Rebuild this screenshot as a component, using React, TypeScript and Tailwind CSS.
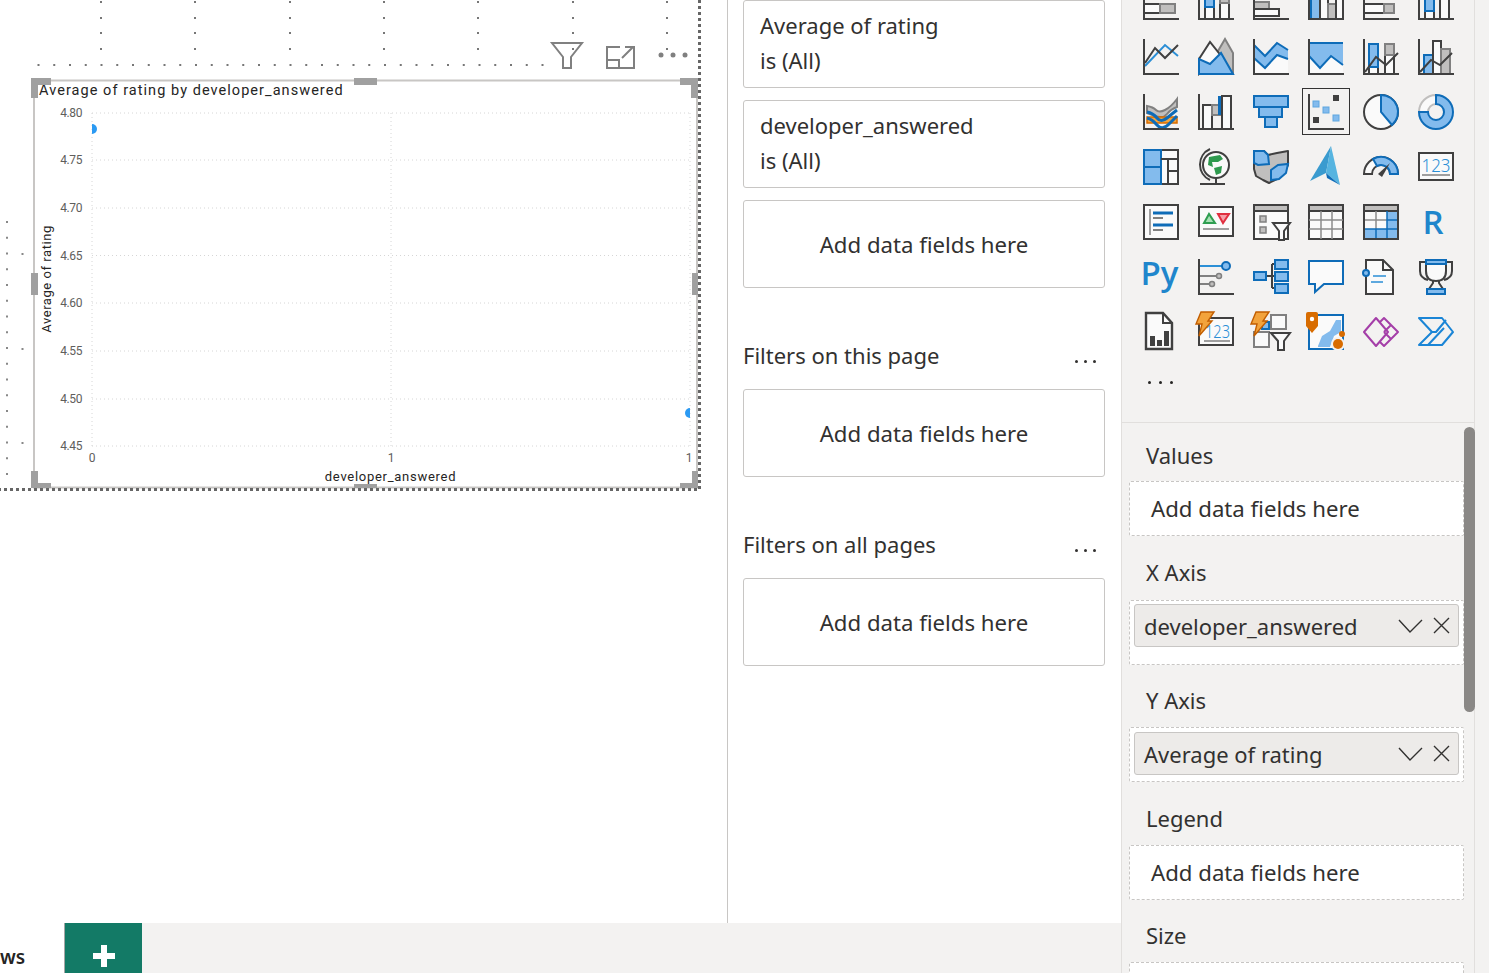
import type { ReactNode } from "react"

const D = "#404040"
const B = "#0e6cb8"
const L = "#83bbed"
const G = "#c0bfbe"
const W = "#fafafa"
const M = "#808080"
const T = "#8c8c8c"

const axis = <path d="M1 0V35H36" fill="none" stroke={D} strokeWidth="2" />
const bolt = <path d="M3 -2H16L10 7H14L1 22L4 10H-2Z" fill="#f2a33c" stroke="#c25e00" strokeWidth="1.4" />

const icons: ReactNode[] = [
  // row 1, cut by the top of the window
  <>
    <rect x="1" y="20" width="16" height="9" fill={W} stroke={D} strokeWidth="2" />
    <rect x="17" y="20" width="15" height="9" fill={G} stroke={M} strokeWidth="2" />
    {axis}
  </>,
  <>
    <rect x="7" y="0" width="9" height="35" fill={W} stroke={D} strokeWidth="2" />
    <rect x="7" y="0" width="9" height="23" fill={L} stroke={B} strokeWidth="2" />
    <rect x="22" y="0" width="9" height="35" fill={W} stroke={D} strokeWidth="2" />
    <rect x="22" y="0" width="9" height="19" fill={G} stroke={M} strokeWidth="2" />
    {axis}
  </>,
  <>
    <rect x="1" y="18" width="15" height="7" fill={G} stroke={M} strokeWidth="2" />
    <rect x="1" y="25" width="25" height="7" fill={W} stroke={D} strokeWidth="2" />
    <path d="M1 16V35H36" fill="none" stroke={D} strokeWidth="2" />
  </>,
  <>
    <rect x="3" y="0" width="9" height="35" fill={L} stroke={B} strokeWidth="2" />
    <rect x="12" y="0" width="8" height="35" fill={W} stroke={D} strokeWidth="2" />
    <rect x="20" y="20" width="8" height="15" fill={G} stroke={M} strokeWidth="2" />
    <rect x="28" y="0" width="7" height="35" fill={W} stroke={D} strokeWidth="2" />
    {axis}
  </>,
  <>
    <rect x="1" y="20" width="20" height="9" fill={W} stroke={D} strokeWidth="2" />
    <rect x="21" y="20" width="10" height="9" fill={G} stroke={M} strokeWidth="2" />
    {axis}
  </>,
  <>
    <rect x="7" y="0" width="9" height="35" fill={W} stroke={D} strokeWidth="2" />
    <rect x="7" y="0" width="9" height="27" fill={L} stroke={B} strokeWidth="2" />
    <rect x="22" y="0" width="9" height="35" fill={W} stroke={D} strokeWidth="2" />
    {axis}
  </>,
  // row 2
  <>
    <path d="M2 27L22 6L35 17" fill="none" stroke="#2b8fd6" strokeWidth="2" />
    <path d="M2 24L12 9L22 19L35 6" fill="none" stroke={D} strokeWidth="2" />
    {axis}
  </>,
  <>
    <path d="M20 12L27 0L35 14V35H20Z" fill={G} stroke={M} strokeWidth="2" />
    <path d="M1 20L12 3L24 18L1 35Z" fill={W} stroke={D} strokeWidth="2" />
    <path d="M1 20V35H35L23 14L12 25Z" fill={L} stroke={B} strokeWidth="2" />
  </>,
  <>
    <path d="M1 19L12 29L24 16L35 20V35H1Z" fill={W} />
    <path d="M1 6L12 17L24 4L35 11V20L24 16L12 29L1 19Z" fill={L} />
    <path d="M1 6L12 17L24 4L35 11M1 19L12 29L24 16L35 20" fill="none" stroke={B} strokeWidth="2" />
    <path d="M1 0V35H36" fill="none" stroke={D} strokeWidth="2" />
  </>,
  <>
    <path d="M1 17L12 29L23 17L35 26V35H1Z" fill={W} />
    <path d="M1 4H35V26L23 17L12 29L1 17Z" fill={L} />
    <path d="M1 4H35M1 17L12 29L23 17L35 26" fill="none" stroke={B} strokeWidth="2" />
    <path d="M1 0V35H36" fill="none" stroke={D} strokeWidth="2" />
  </>,
  <>
    <rect x="6" y="5" width="9" height="30" fill={W} stroke={D} strokeWidth="2" />
    <rect x="6" y="5" width="9" height="23" fill={L} stroke={B} strokeWidth="2" />
    <rect x="22" y="5" width="9" height="30" fill={W} stroke={D} strokeWidth="2" />
    <rect x="22" y="5" width="9" height="11" fill={G} stroke={M} strokeWidth="2" />
    <path d="M2 33L13 18L23 26L35 14" fill="none" stroke={D} strokeWidth="2" />
    {axis}
  </>,
  <>
    <rect x="6" y="16" width="9" height="19" fill={L} stroke={B} strokeWidth="2" />
    <rect x="15" y="2" width="8" height="33" fill={W} stroke={D} strokeWidth="2" />
    <rect x="23" y="10" width="9" height="25" fill={G} stroke={M} strokeWidth="2" />
    <path d="M2 33L13 21L22 26L34 14" fill="none" stroke={D} strokeWidth="2" />
    {axis}
  </>,
  // row 3
  <>
    <path d="M4 12Q10 13 13 16T22 16T34 5V13Q28 15 24 20T12 22L4 19Z" fill={G} stroke={M} strokeWidth="2" />
    <path d="M4 23H34V29H4Z" fill="#f2a33c" stroke="#d86c00" strokeWidth="1.5" />
    <path d="M4 18Q10 19 14 24T24 24T34 16" fill="none" stroke={B} strokeWidth="3" />
    <path d="M4 24Q9 25 14 31T26 30T34 22" fill="none" stroke={B} strokeWidth="3" />
    {axis}
  </>,
  <>
    <rect x="5" y="11" width="9" height="24" fill={W} stroke={D} strokeWidth="2" />
    <rect x="14" y="11" width="9" height="10" fill={G} stroke={M} strokeWidth="2" />
    <rect x="20" y="2" width="4" height="19" fill={B} />
    <rect x="24" y="2" width="9" height="33" fill={W} stroke={D} strokeWidth="2" />
    {axis}
  </>,
  <path d="M1 2H35V13H29V23H24V33H12V23H6V13H1ZM1 13H35M6 23H30" fill={L} stroke={B} strokeWidth="2" />,
  <>
    <rect x="25" y="1" width="6" height="6" fill={D} />
    <rect x="5" y="7" width="6" height="6" fill={L} stroke="#5ea6e0" />
    <rect x="15" y="13" width="6" height="6" fill={L} stroke="#5ea6e0" />
    <rect x="5" y="23" width="6" height="6" fill={D} />
    <rect x="25" y="21" width="6" height="6" fill={L} stroke="#5ea6e0" />
    <path d="M1 0V35H36" fill="none" stroke={D} strokeWidth="2" />
  </>,
  <>
    <circle cx="18" cy="18" r="17" fill={W} stroke={D} strokeWidth="2" />
    <path d="M18 1A17 17 0 0 1 29 31L18 18Z" fill={L} stroke={B} strokeWidth="2" />
  </>,
  <>
    <path d="M18 1A17 17 0 0 0 1 18H10A8 8 0 0 1 18 10Z" fill={W} stroke={G} strokeWidth="2" />
    <path d="M18 1A17 17 0 1 1 1 18H10A8 8 0 1 0 18 10Z" fill={L} stroke={B} strokeWidth="2" />
  </>,
  // row 4
  <>
    <rect x="1" y="1" width="34" height="34" fill={W} stroke={D} strokeWidth="2" />
    <rect x="1" y="1" width="17" height="17" fill={L} stroke={B} strokeWidth="2" />
    <rect x="1" y="18" width="17" height="17" fill={L} stroke={B} strokeWidth="2" />
    <path d="M18 10H35M25 10V35M25 22H35" fill="none" stroke={D} strokeWidth="2" />
  </>,
  <>
    <circle cx="18" cy="16" r="13" fill={W} stroke={D} strokeWidth="2" />
    <path d="M11 8L22 6L25 10L20 13L14 13L15 18L10 16Z" fill="#2e9a4e" />
    <path d="M16 19L24 17L23 24L18 26Z" fill="#2e9a4e" />
    <path d="M12 0A17 17 0 0 0 12 31" fill="none" stroke={D} strokeWidth="2" />
    <path d="M18 29V34M2 35H27" fill="none" stroke={D} strokeWidth="2" />
  </>,
  <>
    <path d="M1 2H11L15 6L24 4L35 2V16L31 24L24 30L16 34L10 31L3 27L1 20Z" fill={G} stroke={D} strokeWidth="2" strokeLinejoin="round" />
    <path d="M1 2H11L15 6L16 15L5 16L1 14Z" fill={L} stroke={B} strokeWidth="2" />
    <path d="M18 21L25 16L35 15L33 24L26 30L18 31Z" fill={L} stroke={B} strokeWidth="2" />
  </>,
  <>
    <path d="M23 -3L2 32L18 24Z" fill="#3a9bcf" />
    <path d="M23 -3L18 24L32 36Z" fill="#56b4e0" />
    <path d="M18 24L32 36L19 29Z" fill="#0e6cb8" />
  </>,
  <>
    <path d="M1 25A17 17 0 0 1 35 25H27A9 9 0 0 0 9 25Z" fill={W} stroke={D} strokeWidth="2" />
    <path d="M10 10A17 17 0 0 1 35 25H27A9 9 0 0 0 14 17Z" fill={L} stroke={B} strokeWidth="2" />
    <path d="M15 25L27 14L19 28Z" fill={D} />
  </>,
  <>
    <rect x="1" y="4" width="34" height="27" fill={W} stroke={D} strokeWidth="2" />
    <text x="18" y="23" textAnchor="middle" fontSize="18" textLength="29" lengthAdjust="spacingAndGlyphs" fill="#2b8fd6" fontFamily="'Noto Sans', sans-serif" fontWeight="300">123</text>
    <path d="M4 26H32" stroke={M} strokeWidth="1.5" />
  </>,
  // row 5
  <>
    <rect x="1" y="1" width="34" height="34" fill={W} stroke={D} strokeWidth="2" />
    <path d="M7 5V31" stroke={M} strokeWidth="1.5" />
    <path d="M10 9H30M10 21H30" stroke={B} strokeWidth="3" />
    <path d="M10 14H20M10 26H20" stroke={M} strokeWidth="2" />
  </>,
  <>
    <rect x="1" y="3" width="34" height="29" fill={W} stroke={D} strokeWidth="2" />
    <path d="M6 19L11 10L17 19Z" fill="#a8e0b5" stroke="#2f9e51" strokeWidth="2" />
    <path d="M20 10H31L25 19Z" fill="#f5a0a8" stroke="#e03040" strokeWidth="2" />
    <path d="M5 25H31" stroke={M} strokeWidth="1.5" />
  </>,
  <>
    <rect x="1" y="1" width="34" height="34" fill={W} stroke={D} strokeWidth="2" />
    <rect x="1" y="1" width="34" height="6" fill={G} stroke={D} strokeWidth="2" />
    <rect x="7" y="12" width="6" height="6" fill={G} stroke={M} strokeWidth="1.5" />
    <rect x="7" y="23" width="6" height="6" fill={G} stroke={M} strokeWidth="1.5" />
    <path d="M20 19H37L31 27V36H26V27Z" fill={W} stroke={D} strokeWidth="2" />
  </>,
  <>
    <rect x="1" y="1" width="34" height="34" fill={W} stroke={D} strokeWidth="2" />
    <rect x="1" y="1" width="34" height="6" fill={G} stroke={D} strokeWidth="2" />
    <path d="M13 7V35M24 7V35M1 16H35M1 25H35" stroke={T} strokeWidth="1.5" />
  </>,
  <>
    <rect x="1" y="1" width="34" height="34" fill={W} stroke={D} strokeWidth="2" />
    <rect x="24" y="7" width="11" height="28" fill={L} />
    <rect x="1" y="25" width="34" height="10" fill={L} />
    <rect x="1" y="1" width="34" height="6" fill={G} stroke={D} strokeWidth="2" />
    <path d="M13 7V25M1 16H24" stroke={T} strokeWidth="1.5" />
    <path d="M24 16H35M1 25H35M13 25V35M24 7V35" stroke={B} strokeWidth="1.5" />
    <rect x="1" y="1" width="34" height="34" fill="none" stroke={D} strokeWidth="2" />
  </>,
  <text x="15" y="30" textAnchor="middle" fontSize="33" fontWeight="600" fill="#1f86cc" fontFamily="'Open Sans', sans-serif">R</text>,
  // row 6
  <text x="16.5" y="26" textAnchor="middle" fontSize="33" fontWeight="600" fill="#1f86cc" fontFamily="'Open Sans', sans-serif">Py</text>,
  <>
    <path d="M1 0V35H36" fill="none" stroke={D} strokeWidth="2" />
    <path d="M2 7H24" stroke="#2b8fd6" strokeWidth="2" />
    <circle cx="28" cy="7" r="4" fill={L} stroke={B} strokeWidth="2" />
    <path d="M2 17H18M2 25H11" stroke={M} strokeWidth="2" />
    <circle cx="21" cy="17" r="2.5" fill={G} stroke={M} strokeWidth="1.5" />
    <circle cx="14" cy="25" r="2.5" fill={G} stroke={M} strokeWidth="1.5" />
  </>,
  <>
    <path d="M13 17H19M19 5V29M19 5H22M19 17H22M19 29H22" fill="none" stroke={D} strokeWidth="2" />
    <rect x="1" y="13" width="12" height="8" fill={L} stroke={B} strokeWidth="2" />
    <rect x="22" y="1" width="13" height="9" fill={L} stroke={B} strokeWidth="2" />
    <rect x="22" y="13" width="13" height="9" fill={L} stroke={B} strokeWidth="2" />
    <rect x="22" y="25" width="13" height="9" fill={L} stroke={B} strokeWidth="2" />
  </>,
  <path d="M1 2H35V25H16L7 33V25H1Z" fill={W} stroke={B} strokeWidth="2" />,
  <>
    <path d="M3 1H20L30 11V35H3Z" fill={W} stroke={D} strokeWidth="2" />
    <path d="M20 1V11H30" fill="none" stroke={D} strokeWidth="2" />
    <circle cx="3" cy="14" r="3" fill={L} stroke={B} strokeWidth="2" />
    <path d="M10 17H23M8 23H20" stroke="#2b8fd6" strokeWidth="1.5" />
  </>,
  <>
    <path d="M8 3H2V12Q2 19 10 21M28 3H34V12Q34 19 26 21" fill="none" stroke={D} strokeWidth="2" />
    <path d="M8 1H28V12Q28 22 18 22Q8 22 8 12Z" fill={W} stroke={D} strokeWidth="2" />
    <rect x="8" y="1" width="20" height="4" fill={L} stroke={B} strokeWidth="2" />
    <path d="M15 22V24L11 30H25L21 24V22" fill="none" stroke={D} strokeWidth="2" />
    <rect x="9" y="30" width="18" height="5" fill={L} stroke={B} strokeWidth="2" />
  </>,
  // row 7
  <>
    <path d="M3 -1H20L29 9V35H3Z" fill={W} stroke={D} strokeWidth="2.4" />
    <path d="M20 -1V9H29" fill="none" stroke={D} strokeWidth="2" />
    <path d="M7 22H12V32H7ZM14 26H19V32H14ZM21 17H26V32H21Z" fill={D} />
  </>,
  <>
    <rect x="1" y="4" width="34" height="27" fill={W} stroke={D} strokeWidth="2" />
    <text x="19.5" y="24" textAnchor="middle" fontSize="18" textLength="25" lengthAdjust="spacingAndGlyphs" fill="#2b8fd6" fontFamily="'Noto Sans', sans-serif" fontWeight="300">123</text>
    <path d="M6 27H32" stroke={M} strokeWidth="1.5" />
    {bolt}
  </>,
  <>
    <rect x="18" y="1" width="15" height="14" fill={W} stroke={M} strokeWidth="2" />
    <rect x="1" y="18" width="15" height="15" fill={W} stroke={M} strokeWidth="2" />
    <rect x="9" y="8" width="7" height="7" fill={L} stroke={B} strokeWidth="2" />
    <path d="M18 19H37L31 27V36H25V27Z" fill={W} stroke={D} strokeWidth="2" />
    {bolt}
  </>,
  <>
    <rect x="1" y="1" width="34" height="34" fill={W} stroke={B} strokeWidth="2" />
    <path d="M10 32L14 22L22 17L28 6H33V18L26 22L22 33H10Z" fill={L} />
    <path d="M-2 0Q-2 -2 0 -2H8Q10 -2 10 0V12L4 19L-2 12Z" fill="#d86c00" />
    <circle cx="4" cy="5" r="2.2" fill="white" />
    <circle cx="30" cy="30" r="7" fill="#f3f2f1" />
    <circle cx="30" cy="30" r="5" fill="#d86c00" />
    <circle cx="34" cy="20" r="3" fill="#d86c00" />
  </>,
  <path d="M1 18L13 4L25 18L13 32ZM17 8L21 4L35 18L21 32L17 28M21 18L28 11M21 18L28 25" fill="none" stroke="#a43ea8" strokeWidth="2" strokeLinejoin="round" />,
  <path d="M1 4H24L35 18L24 31H1L14 18ZM14 18H18L28 6M10 31L26 14" fill="none" stroke="#1a85d6" strokeWidth="2" strokeLinejoin="round" />,
]

function Well({
  label,
  chip,
  mt,
  lmt,
  tall,
  empty,
}: {
  label: string
  chip?: string
  mt: string
  lmt: string
  tall?: boolean
  empty?: boolean
}) {
  return (
    <div className={lmt}>
      <div className="pl-[24px] h-[35px] flex items-center text-[22px] text-[#323130]">{label}</div>
      {chip ? (
        <div className={`${mt} ${tall ? "h-[65px] pt-[3px]" : "h-[55px] pt-[4px]"} w-[335px] ml-[7px] bg-white border border-dashed border-[#c8c6c4] rounded-[2px] px-[4px]`}>
          <div className="h-[43px] bg-[#edebe9] border border-[#c8c6c4] rounded-[3px] flex items-center pl-[9px] pr-[8px] text-[#323130] text-[22px]">
            <span className="flex-1 pt-[2px]">{chip}</span>
            <svg width="52" height="18" viewBox="0 0 52 18" fill="none" stroke="#323130" strokeWidth="1.4">
              <path d="M1 3L12 15L24 3" />
              <path d="M36 1L51 16M51 1L36 16" />
            </svg>
          </div>
        </div>
      ) : (
        <div className={`${mt} h-[55px] w-[335px] ml-[7px] bg-white border border-dashed border-[#c8c6c4] rounded-[2px] flex items-center pl-[21px] text-[22.2px] text-[#323130]`}>
          {empty ? null : "Add data fields here"}
        </div>
      )}
    </div>
  )
}

function FilterCard({ title }: { title?: string[] }) {
  return (
    <div className="h-[88px] bg-white border border-[#c8c6c4] rounded-[3px] flex flex-col justify-center text-[22px] leading-[35px] text-[#323130]">
      {title ? (
        <div className="pl-[16px] pb-[2px]">
          {title.map((t) => (
            <div key={t}>{t}</div>
          ))}
        </div>
      ) : (
        <div className="text-center pt-[1px] text-[22.2px]">Add data fields here</div>
      )}
    </div>
  )
}

function FilterHead({ title }: { title: string }) {
  return (
    <div className="h-[35px] flex items-center justify-between text-[22px] text-[#323130] mt-[50px] mb-[16px]">
      <span>{title}</span>
      <span className="flex gap-[6px] pr-[9px] pt-[12px]">
        <i className="w-[3px] h-[3px] rounded-full bg-[#323130]" />
        <i className="w-[3px] h-[3px] rounded-full bg-[#323130]" />
        <i className="w-[3px] h-[3px] rounded-full bg-[#323130]" />
      </span>
    </div>
  )
}

const snapTop = [101, 195, 290, 384, 478, 573, 667]
const yTicks = [
  ["4.80", 113],
  ["4.75", 160],
  ["4.70", 208],
  ["4.65", 255.5],
  ["4.60", 303],
  ["4.55", 351],
  ["4.50", 399],
  ["4.45", 446],
] as const

function Chart() {
  const chartFont = "'Roboto', sans-serif"
  return (
    <svg className="absolute left-0 top-0" width="727" height="495" viewBox="0 0 727 495">
      {/* snap grid */}
      {snapTop.map((x) =>
        [2, 18, 33, 49].map((y) => <rect key={`${x}-${y}`} x={x - 1} y={y - 1} width="2" height="2" fill="#777" />),
      )}
      {Array.from({ length: 33 }, (_, i) => (
        <rect key={i} x={37.5 + i * 15.75} y="64" width="2" height="2" fill="#777" />
      ))}
      {Array.from({ length: 17 }, (_, i) => (
        <rect key={i} x="6" y={221 + i * 15.75} width="2" height="2" fill="#888" />
      ))}
      {[254, 349, 443].map((y) => (
        <rect key={y} x="21.5" y={y - 1} width="2" height="2" fill="#888" />
      ))}

      {/* visual frame */}
      <rect x="34" y="80.5" width="663" height="407" fill="white" stroke="#c8c6c4" strokeWidth="2" />
      <path d="M699.5 0V489.5H0" fill="none" stroke="#666" strokeWidth="3" strokeDasharray="3 3" />

      {/* plot */}
      <g stroke="#d6d6d6" strokeWidth="1" strokeDasharray="1 3">
        {yTicks.map(([, y]) => (
          <line key={y} x1="92" x2="690" y1={y} y2={y} />
        ))}
        {[92, 391, 690].map((x) => (
          <line key={x} x1={x} x2={x} y1="113" y2="446" />
        ))}
      </g>
      <path d="M92 124A5 5 0 0 1 92 134Z" fill="#2b9af3" />
      <path d="M690 408A5 5 0 0 0 690 418Z" fill="#2b9af3" />
      <g fontFamily={chartFont} fontSize="12" fill="#605e5c">
        {yTicks.map(([t, y]) => (
          <text key={t} x="82" y={y + 4} textAnchor="end" letterSpacing="-0.4">{t}</text>
        ))}
        <text x="92" y="462" textAnchor="middle">0</text>
        <text x="391" y="462" textAnchor="middle">1</text>
        <text x="689" y="462" textAnchor="middle">1</text>
      </g>
      <g fontFamily={chartFont} fontSize="13" fill="#252423">
        <text x="39" y="95" fontSize="14.5" letterSpacing="1.05">Average of rating by developer_answered</text>
        <text x="390.5" y="481" textAnchor="middle" letterSpacing="0.72">developer_answered</text>
        <text transform="translate(51 279) rotate(-90)" textAnchor="middle" letterSpacing="0.55">Average of rating</text>
      </g>

      {/* handles */}
      <g fill="#a0a0a0">
        <path d="M31 78H51V85H38V98H31Z" />
        <path d="M698 78H680V85H691V98H698Z" />
        <path d="M31 471H38V483H51V488H31Z" />
        <path d="M698 471H692V483H680V488H698Z" />
        <rect x="354" y="78" width="23" height="7" />
        <rect x="354" y="484" width="23" height="4" />
        <rect x="31" y="273" width="7" height="22" />
        <rect x="692" y="273" width="6" height="22" />
      </g>

      {/* visual header */}
      <g fill="none" stroke={M} strokeWidth="2">
        <path d="M552 43H582L571 57V68H563V57Z" />
        <path d="M620 47H607V68H634V55M607 60H619V68M622 58L633 47M625 47H634V56" />
      </g>
      <g fill={M}>
        <circle cx="661" cy="55" r="2.5" />
        <circle cx="673" cy="55" r="2.5" />
        <circle cx="685" cy="55" r="2.5" />
      </g>
    </svg>
  )
}

export default function App() {
  return (
    <div className="w-[1489px] h-[973px] overflow-hidden flex bg-white font-['Noto_Sans',sans-serif]">
      <div className="w-[1121px] flex flex-col">
        <div className="h-[923px] flex">
          <div className="relative w-[728px] border-r border-[#c8c6c4] bg-white">
            <Chart />
          </div>
          <div className="w-[393px] pl-[15px] pr-[16px] flex flex-col">
            <div className="flex flex-col gap-[12px]">
              <FilterCard title={["Average of rating", "is (All)"]} />
              <FilterCard title={["developer_answered", "is (All)"]} />
              <FilterCard />
            </div>
            <FilterHead title="Filters on this page" />
            <FilterCard />
            <FilterHead title="Filters on all pages" />
            <FilterCard />
          </div>
        </div>
        <div className="h-[50px] flex bg-[#f3f2f1]">
          <div className="w-[65px] bg-white border-r border-[#a6a6a6] overflow-hidden flex items-end pb-[2px] text-[19px] font-semibold text-[#252423]">
            ws
          </div>
          <div className="w-[77px] bg-[#137a66] flex items-center justify-center">
            <svg width="22" height="22" viewBox="0 0 22 22" className="mt-[16px]">
              <path d="M8 0H14V8H22V14H14V22H8V14H0V8H8Z" fill="white" />
            </svg>
          </div>
        </div>
      </div>
      <div className="relative flex-1 bg-[#f3f2f1] border-l border-[#e1dfdd] overflow-hidden">
        <div className="w-[353px] h-full border-r border-[#e1dfdd]">
          <div className="h-[423px] border-b border-[#e1dfdd] overflow-hidden">
            <div className="grid grid-cols-[repeat(6,55px)] auto-rows-[55px] ml-[12px] -mt-[25px]">
              {icons.map((icon, i) => (
                <div key={i} className="pl-[9px] pt-[9px]">
                  <div className="relative w-[36px] h-[36px]">
                    {i === 15 && <div className="absolute left-[-6px] top-[-6px] w-[48px] h-[47px] border border-[#333]" />}
                    <svg width="36" height="36" viewBox="0 0 36 36" overflow="visible">{icon}</svg>
                  </div>
                </div>
              ))}
              <div className="flex gap-[8px] items-center justify-center -mt-[10px] pr-[2px]">
                <i className="w-[3px] h-[3px] rounded-full bg-[#252423]" />
                <i className="w-[3px] h-[3px] rounded-full bg-[#252423]" />
                <i className="w-[3px] h-[3px] rounded-full bg-[#252423]" />
              </div>
            </div>
          </div>
          <div className="pt-[15px] flex flex-col">
            <Well label="Values" lmt="" mt="mt-[8px]" />
            <Well label="X Axis" chip="developer_answered" lmt="mt-[19px]" mt="mt-[10px]" tall />
            <Well label="Y Axis" chip="Average of rating" lmt="mt-[18px]" mt="mt-[9px]" />
            <Well label="Legend" lmt="mt-[19px]" mt="mt-[9px]" />
            <Well label="Size" lmt="mt-[18px]" mt="mt-[9px]" empty />
          </div>
        </div>
        <div className="absolute left-[342px] top-[427px] w-[11px] h-[285px] rounded-full bg-[#8a8886]" />
      </div>
    </div>
  )
}
